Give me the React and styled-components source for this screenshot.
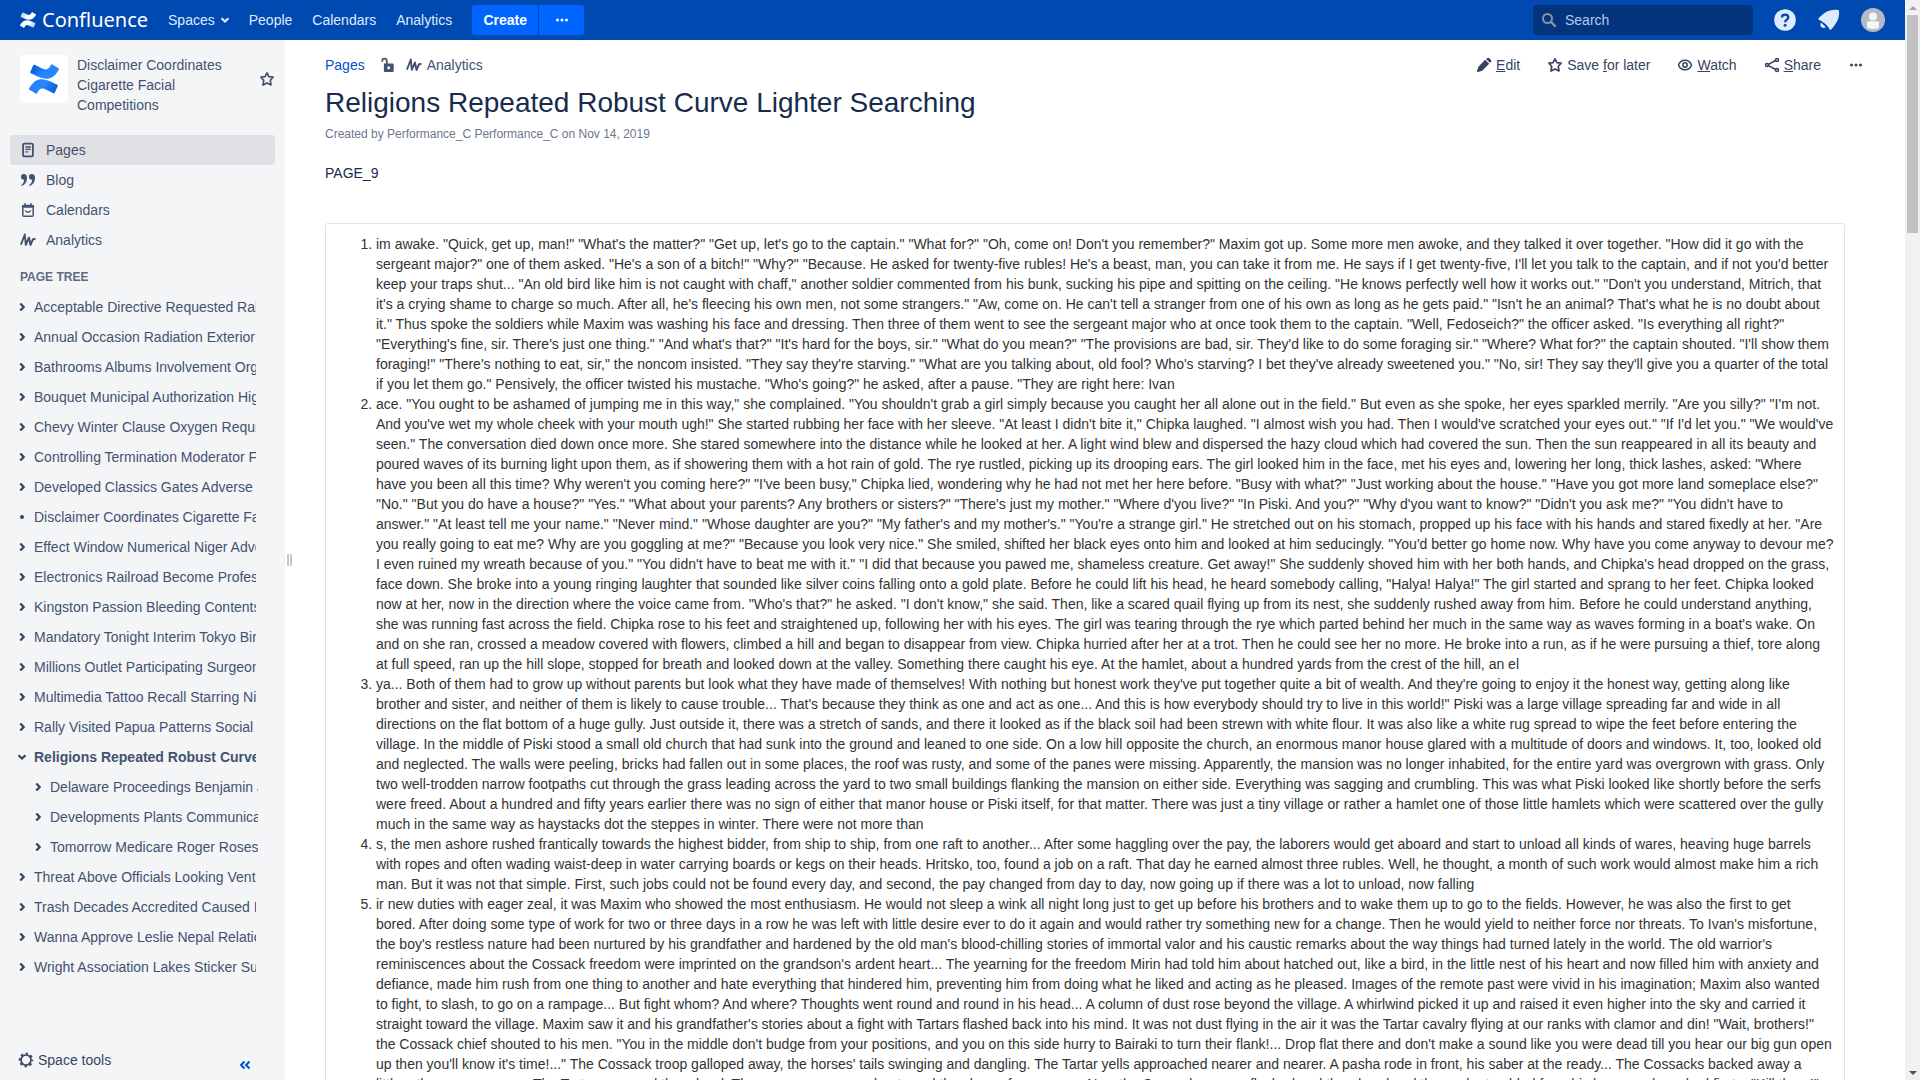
import React from "react";
import styled, { createGlobalStyle } from "styled-components";

const Global = createGlobalStyle`
  *, *::before, *::after { box-sizing: border-box; }
  body {
    margin: 0;
    background: #fff;
    color: #172b4d;
    font-family: "Liberation Sans", Arial, sans-serif;
    font-size: 14px;
    line-height: 20px;
  }
  button, input { font: inherit; color: inherit; }
  a { color: inherit; text-decoration: none; }
  svg { display: block; flex: none; }
`;

const Window = styled.div`
  display: flex;
  height: 100vh;
  overflow: hidden;
`;

const Frame = styled.div`
  flex: 1;
  min-width: 0;
  display: flex;
  flex-direction: column;
`;

/* ---------- Header ---------- */

const Header = styled.header`
  flex: none;
  height: 40px;
  padding: 0 20px;
  display: flex;
  align-items: center;
  background: #0049b0;
  color: #deebff;
`;

const Brand = styled.a`
  display: flex;
  align-items: center;
  gap: 6px;
  margin-right: 10px;
  color: #fff;
  font-family: "Noto Sans", sans-serif;
  font-size: 20px;
  line-height: 30px;
`;

const HeaderNav = styled.nav`
  display: flex;
  align-items: center;
`;

const HeaderLink = styled.a`
  display: flex;
  align-items: center;
  gap: 6px;
  padding: 0 10px;
  height: 30px;
`;

const CreateGroup = styled.div`
  display: flex;
  gap: 1px;
  margin-left: 10px;
`;

const CreateButton = styled.button`
  height: 30px;
  min-width: ${(p) => (p.$more ? "45px" : "66px")};
  padding: 0;
  border: 0;
  border-radius: ${(p) => (p.$more ? "0 3px 3px 0" : "3px 0 0 3px")};
  background: #0065ff;
  color: #fff;
  font-weight: bold;
  display: flex;
  align-items: center;
  justify-content: center;
`;

const SearchBox = styled.label`
  display: flex;
  align-items: center;
  gap: 8px;
  width: 220px;
  height: 30px;
  margin-left: auto;
  padding: 0 8px;
  border-radius: 3px;
  background: #04347c;
  color: #8993a4;
`;

const SearchInput = styled.input`
  flex: 1;
  min-width: 0;
  padding: 0;
  border: 0;
  background: transparent;
  outline: 0;
  color: #deebff;
  &::placeholder { color: #b3cbed; opacity: 1; }
`;

const HeaderIcons = styled.div`
  display: flex;
  align-items: center;
  gap: 20px;
  margin-left: 20px;
`;

const IconButton = styled.button`
  display: flex;
  align-items: center;
  justify-content: center;
  width: 24px;
  height: 24px;
  padding: 0;
  border: 0;
  background: none;
`;

/* ---------- Sidebar ---------- */

const Body = styled.div`
  flex: 1;
  min-height: 0;
  display: flex;
`;

const Sidebar = styled.aside`
  flex: none;
  width: 285px;
  padding: 15px 10px 10px;
  display: flex;
  flex-direction: column;
  background: #f4f5f7;
  color: #42526e;
`;

const SpaceHeader = styled.div`
  display: flex;
  gap: 9px;
  padding: 0 0 0 10px;
  margin-bottom: 20px;
`;

const SpaceLogo = styled.a`
  flex: none;
  display: flex;
  align-items: center;
  justify-content: center;
  width: 48px;
  height: 48px;
  border-radius: 3px;
  background: #fff;
`;

const SpaceName = styled.a`
  flex: 1;
  padding-right: 20px;
`;

const StarButton = styled(IconButton)`
  width: 16px;
  height: 48px;
`;

const SideNav = styled.nav`
  display: flex;
  flex-direction: column;
`;

const SideLink = styled.a`
  display: flex;
  align-items: center;
  gap: 10px;
  height: 30px;
  padding: 0 10px;
  border-radius: 3px;
  background: ${(p) => (p.$active ? "#dfe1e5" : "transparent")};
`;

const TreeHeading = styled.h2`
  margin: 12px 10px 5px;
  color: #5e6c84;
  font-size: 12px;
  line-height: 20px;
`;

const Tree = styled.ul`
  list-style: none;
  margin: 0;
  padding: 0;
`;

const TreeRow = styled.li`
  display: flex;
  align-items: center;
  height: 30px;
  margin-left: ${(p) => (p.$child ? "22px" : "6px")};
  margin-right: ${(p) => (p.$child ? "17px" : "19px")};
`;

const Toggle = styled.button`
  display: flex;
  align-items: center;
  justify-content: center;
  width: 12px;
  height: 20px;
  margin-right: 6px;
  padding: 0;
  border: 0;
  background: none;
  color: #344563;
`;

const TreeLink = styled.a`
  flex: 1;
  min-width: 0;
  overflow: hidden;
  white-space: nowrap;
  font-weight: ${(p) => (p.$current ? "bold" : "normal")};
`;

const SidebarFooter = styled.div`
  display: flex;
  align-items: center;
  justify-content: space-between;
  height: 20px;
  margin: auto 24px 0 8px;
`;

const ToolsButton = styled.button`
  display: flex;
  align-items: center;
  gap: 4px;
  padding: 0;
  border: 0;
  background: none;
  color: #344563;
`;

const CollapseButton = styled(IconButton)`
  align-items: flex-end;
  width: 12px;
  height: 20px;
  color: #0052cc;
`;

const Splitter = styled.div`
  flex: none;
  width: 8px;
  display: flex;
  align-items: center;
  justify-content: center;
  gap: 1px;
`;

const Grip = styled.span`
  width: 2px;
  height: 12px;
  background: #c1c7d6;
`;

/* ---------- Page ---------- */

const Main = styled.main`
  flex: 1;
  min-width: 0;
  padding: 10px 0 0 32px;
  overflow: hidden;
`;

const Toolbar = styled.div`
  display: flex;
  align-items: center;
  justify-content: space-between;
  height: 30px;
  padding-right: 31px;
`;

const Crumbs = styled.div`
  display: flex;
  align-items: center;
  color: #42526e;
`;

const CrumbLink = styled.a`
  color: #0052cc;
  margin-right: 14px;
`;

const LockButton = styled(IconButton)`
  width: 16px;
  margin-right: 11px;
`;

const CrumbAnalytics = styled.a`
  display: flex;
  align-items: center;
  gap: 5px;
`;

const Actions = styled.div`
  display: flex;
  gap: 7px;
`;

const Action = styled.button`
  display: flex;
  align-items: center;
  gap: 4px;
  height: 30px;
  padding: 0 10px;
  border: 0;
  background: none;
  color: #344563;
`;

const Title = styled.h1`
  margin: 7px 60px 0 0;
  color: #172b4d;
  font-size: 28px;
  font-weight: normal;
  line-height: 32px;
`;

const Meta = styled.p`
  margin: 5px 0 0;
  color: #6b778c;
  font-size: 12px;
  line-height: 20px;
`;

const Intro = styled.p`
  margin: 19px 0 40px;
`;

const Panel = styled.section`
  margin-right: 60px;
  padding: 10px;
  border: 1px solid #dfe1e5;
  border-radius: 3px;
  color: #333;
`;

const Excerpts = styled.ol`
  margin: 0;
  padding: 0 0 0 40px;
`;

/* ---------- Scrollbar ---------- */

const Scrollbar = styled.div`
  flex: none;
  width: 15px;
  padding: 0 2px;
  display: flex;
  flex-direction: column;
  justify-content: space-between;
  background: #f1f1f1;
`;

const Thumb = styled.div`
  height: 218px;
  background: #c1c1c1;
`;

const ScrollEnd = styled.div`
  height: 15px;
  display: flex;
  align-items: center;
  justify-content: center;
`;

/* ---------- Icons ---------- */

const Icon = ({ size = 16, children, ...rest }) => (
  <svg width={size} height={size} viewBox="0 0 16 16" fill="none" stroke="currentColor" strokeWidth="1.6" strokeLinecap="round" strokeLinejoin="round" aria-hidden="true" {...rest}>
    {children}
  </svg>
);

const ConfluenceMark = ({ size, id, from, to }) => (
  <svg width={size} height={size} viewBox="0 0 24 24" aria-hidden="true">
    <defs>
      <linearGradient id={`${id}a`} x1="0" y1="0" x2="1" y2="0.4">
        <stop offset="0" stopColor={from} />
        <stop offset="0.6" stopColor={to} />
      </linearGradient>
      <linearGradient id={`${id}b`} x1="1" y1="1" x2="0" y2="0.6">
        <stop offset="0" stopColor={from} />
        <stop offset="0.6" stopColor={to} />
      </linearGradient>
    </defs>
    <path fill={`url(#${id}b)`} d="M.87 18.257c-.248.382-.53.875-.763 1.245a.764.764 0 0 0 .255 1.04l4.965 3.054a.764.764 0 0 0 1.058-.26c.199-.332.454-.763.733-1.221 1.967-3.247 3.945-2.853 7.508-1.146l4.957 2.337a.764.764 0 0 0 1.028-.382l2.364-5.346a.764.764 0 0 0-.382-1 599.851 599.851 0 0 1-4.965-2.361C10.911 10.97 5.224 11.185.87 18.257z" />
    <path fill={`url(#${id}a)`} d="M23.131 5.743c.249-.405.531-.875.764-1.25a.764.764 0 0 0-.256-1.034L18.675.404a.764.764 0 0 0-1.058.26c-.195.335-.451.763-.734 1.225-1.966 3.246-3.945 2.85-7.508 1.146L4.437.694a.764.764 0 0 0-1.027.382L1.046 6.422a.764.764 0 0 0 .382 1c1.039.49 3.105 1.467 4.965 2.361 6.698 3.246 12.392 3.029 16.738-4.04z" />
  </svg>
);

const Dots = () => (
  <Icon>
    <g fill="currentColor" stroke="none">
      <circle cx="3.500" cy="8" r="1.500" />
      <circle cx="8" cy="8" r="1.500" />
      <circle cx="12.500" cy="8" r="1.500" />
    </g>
  </Icon>
);

const Star = () => (
  <Icon>
    <path d="M8 1.8 L9.9 5.6 L14.1 6.2 L11.3 9.3 L12 14 L8 12 L4 14 L4.7 9.3 L1.9 6.2 L6.1 5.6 Z" strokeWidth="1.7" />
  </Icon>
);

const Pulse = () => (
  <Icon>
    <path d="M1.200 12 L4.800 2.500 L5.800 12.800 L9 5.500 L10.500 13 L13 7.200 L14.800 7" strokeWidth="1.900" />
  </Icon>
);

const PageIcon = () => (
  <Icon>
    <rect x="3.100" y="1.600" width="9.800" height="12.800" rx="1.200" strokeWidth="1.800" />
    <path d="M5.800 5h4.600M5.800 7.400h4.600M5.800 9.800h2" strokeWidth="1.300" />
  </Icon>
);

const QuoteIcon = () => (
  <Icon>
    <g fill="currentColor" stroke="none">
      <path d="M1 4.900a2.800 2.800 0 0 1 2.900-2.800C5.800 2.100 7 3.700 7 6c0 4-2 6.800-5.200 7.900-.5.100-.8-.5-.4-.9C3.100 11.700 4 10 4.200 7.700 2.300 7.900 1 6.700 1 4.900z" />
      <path d="M9 4.900a2.800 2.800 0 0 1 2.900-2.800C13.800 2.100 15 3.700 15 6c0 4-2 6.800-5.200 7.900-.5.100-.8-.5-.4-.9 1.700-1.300 2.600-3 2.800-5.300C10.300 7.900 9 6.700 9 4.900z" />
    </g>
  </Icon>
);

const CalendarIcon = () => (
  <Icon>
    <rect x="2.800" y="3.500" width="10.400" height="10.700" rx="1" strokeWidth="1.500" />
    <path d="M2.800 4.600h10.400" strokeWidth="2.200" />
    <path d="M5 1.800v2M11 1.800v2" strokeWidth="1.500" />
    <path d="M5.400 8.800c.8 1.900 4.400 1.900 5.200 0" strokeWidth="1.300" />
  </Icon>
);

const Chevron = ({ down }) => (
  <svg width="8" height="8" viewBox="1 1 8 8" fill="none" stroke="currentColor" strokeWidth="2.200" aria-hidden="true">
    <path d={down ? "M1.500 3.200 L5 6.500 L8.500 3.200" : "M3.300 1.500 L6.700 5 L3.300 8.500"} />
  </svg>
);

const Bullet = () => (
  <svg width="10" height="10" viewBox="0 0 10 10" aria-hidden="true">
    <circle cx="5" cy="5" r="2" fill="currentColor" />
  </svg>
);

const LockIcon = () => (
  <Icon>
    <path fill="currentColor" fillRule="evenodd" stroke="none" d="M5 6.500h8.500a1.200 1.200 0 0 1 1.200 1.200v6a1.200 1.200 0 0 1-1.200 1.200H6a1.200 1.200 0 0 1-1.200-1.200zM9.700 9.300a1.500 1.500 0 1 0 0 3 1.500 1.500 0 0 0 0-3z" />
    <path d="M3.200 4.800V4a2.300 2.300 0 0 1 4.600 0V7" strokeWidth="1.700" strokeLinecap="butt" />
  </Icon>
);

const Pencil = () => (
  <Icon>
    <path fill="currentColor" stroke="none" d="M9.200 2.800l4 4-6.700 6.700c-.4.400-3.800 1.400-4.800 1.500-.4 0-.8-.3-.7-.8.100-.9 1.300-4.400 1.600-4.800zM10.100 1.900l.8-.7c.7-.7 1.700-.7 2.400 0l1.500 1.500c.7.700.7 1.700 0 2.400l-.7.800z" />
  </Icon>
);

const Eye = () => (
  <Icon>
    <path d="M1.500 8C2.600 5.100 5.200 3.200 8 3.200S13.400 5.100 14.500 8C13.400 10.900 10.800 12.800 8 12.800S2.600 10.900 1.500 8z" strokeWidth="1.500" />
    <circle cx="8" cy="8" r="2.200" strokeWidth="1.500" />
  </Icon>
);

const ShareIcon = () => (
  <Icon strokeWidth="1.500">
    <path d="M4.500 7.300 L11.500 3.500 M4.500 8.700 L11.500 12.500" />
    <circle cx="3" cy="8" r="1.500" />
    <circle cx="13" cy="3" r="1.500" />
    <circle cx="13" cy="13" r="1.500" />
  </Icon>
);

const SearchIcon = () => (
  <Icon>
    <circle cx="6.500" cy="6.500" r="4.500" strokeWidth="2" />
    <path d="M10.200 10.200 L14 14" strokeWidth="2.400" />
  </Icon>
);

const Gear = () => (
  <Icon>
    <circle cx="8" cy="8" r="5" strokeWidth="1.700" />
    <circle cx="8" cy="8" r="6.400" strokeWidth="1.800" strokeLinecap="butt" strokeDasharray="2.500 2.527" strokeDashoffset="1.250" />
  </Icon>
);

const Collapse = () => (
  <svg width="12" height="10" viewBox="0 0 12 10" fill="none" stroke="currentColor" strokeWidth="2" aria-hidden="true">
    <path d="M5.500 1.500 L2 5 L5.500 8.500 M10.500 1.500 L7 5 L10.500 8.500" />
  </svg>
);

const HelpIcon = () => (
  <svg width="24" height="24" viewBox="0 0 24 24" aria-hidden="true">
    <circle cx="12" cy="12" r="10.800" fill="#deebff" />
    <path d="M8.900 9.600c0-1.800 1.300-3 3.200-3s3.200 1.100 3.200 2.800c0 2.100-3.200 2.400-3.200 4.900" fill="none" stroke="#0049b0" strokeWidth="2.300" />
    <circle cx="12.100" cy="17.300" r="1.500" fill="#0049b0" />
  </svg>
);

const NotificationIcon = () => (
  <svg width="24" height="24" viewBox="0 0 24 24" fill="#deebff" aria-hidden="true">
    <path d="M1.400 10.600C5 6.600 9 3.300 13 2.500c2.700-.6 5.400-.8 8-.5.600.1.900.4 1 1 .2 2.300.1 4.600-.6 7-1 3.800-4.200 8-7.500 11.800-.3.300-.7.200-.9-.1-1.600-2.600-3.200-4.500-5.200-6.200-2-1.600-4-2.900-6.300-4-.4-.2-.4-.6-.1-.9z" />
    <path d="M4 14.600l4.700 4.500c-1.200 1.200-3 1.200-4.200.1-1.200-1.200-1.500-3.200-.5-4.600z" />
  </svg>
);

const Avatar = () => (
  <svg width="24" height="24" viewBox="0 0 24 24" aria-hidden="true">
    <circle cx="12" cy="12" r="12" fill="#b3bac5" />
    <circle cx="12" cy="8.600" r="4" fill="#f4f5f7" />
    <path d="M6 14.500c0-.8.700-1.300 1.500-1.300h9c.8 0 1.500.5 1.500 1.300V19c0 1.200-3 2-6 2s-6-.8-6-2z" fill="#f4f5f7" />
  </svg>
);

const Arrow = ({ up }) => (
  <svg width="8" height="4" viewBox="0 0 8 4" aria-hidden="true">
    <path d={up ? "M0 4 L4 0 L8 4 Z" : "M0 0 L4 4 L8 0 Z"} fill={up ? "#a3a3a3" : "#505050"} />
  </svg>
);

/* ---------- Data ---------- */

const spaceLinks = [
  { label: "Pages", icon: PageIcon, active: true },
  { label: "Blog", icon: QuoteIcon },
  { label: "Calendars", icon: CalendarIcon },
  { label: "Analytics", icon: Pulse },
];

const pages = [
  { title: "Acceptable Directive Requested Rally" },
  { title: "Annual Occasion Radiation Exterior" },
  { title: "Bathrooms Albums Involvement Organ" },
  { title: "Bouquet Municipal Authorization High" },
  { title: "Chevy Winter Clause Oxygen Required" },
  { title: "Controlling Termination Moderator Fa" },
  { title: "Developed Classics Gates Adverse" },
  { title: "Disclaimer Coordinates Cigarette Facial", leaf: true },
  { title: "Effect Window Numerical Niger Adve" },
  { title: "Electronics Railroad Become Profess" },
  { title: "Kingston Passion Bleeding Contents" },
  { title: "Mandatory Tonight Interim Tokyo Birds" },
  { title: "Millions Outlet Participating Surgeon" },
  { title: "Multimedia Tattoo Recall Starring Nig" },
  { title: "Rally Visited Papua Patterns Social" },
  { title: "Religions Repeated Robust Curve", open: true },
  { title: "Delaware Proceedings Benjamin J", child: true },
  { title: "Developments Plants Communication", child: true },
  { title: "Tomorrow Medicare Roger Roses", child: true },
  { title: "Threat Above Officials Looking Vent" },
  { title: "Trash Decades Accredited Caused In" },
  { title: "Wanna Approve Leslie Nepal Relation" },
  { title: "Wright Association Lakes Sticker Sup" },
];

const excerpts = [
  `im awake. "Quick, get up, man!" "What's the matter?" "Get up, let's go to the captain." "What for?" "Oh, come on! Don't you remember?" Maxim got up. Some more men awoke, and they talked it over together. "How did it go with the sergeant major?" one of them asked. "He's a son of a bitch!" "Why?" "Because. He asked for twenty-five rubles! He's a beast, man, you can take it from me. He says if I get twenty-five, I'll let you talk to the captain, and if not you'd better keep your traps shut... "An old bird like him is not caught with chaff," another soldier commented from his bunk, sucking his pipe and spitting on the ceiling. "He knows perfectly well how it works out." "Don't you understand, Mitrich, that it's a crying shame to charge so much. After all, he's fleecing his own men, not some strangers." "Aw, come on. He can't tell a stranger from one of his own as long as he gets paid." "Isn't he an animal? That's what he is no doubt about it." Thus spoke the soldiers while Maxim was washing his face and dressing. Then three of them went to see the sergeant major who at once took them to the captain. "Well, Fedoseich?" the officer asked. "Is everything all right?" "Everything's fine, sir. There's just one thing." "And what's that?" "It's hard for the boys, sir." "What do you mean?" "The provisions are bad, sir. They'd like to do some foraging sir." "Where? What for?" the captain shouted. "I'll show them foraging!" "There's nothing to eat, sir," the noncom insisted. "They say they're starving." "What are you talking about, old fool? Who's starving? I bet they've already sweetened you." "No, sir! They say they'll give you a quarter of the total if you let them go." Pensively, the officer twisted his mustache. "Who's going?" he asked, after a pause. "They are right here: Ivan`,
  `ace. "You ought to be ashamed of jumping me in this way," she complained. "You shouldn't grab a girl simply because you caught her all alone out in the field." But even as she spoke, her eyes sparkled merrily. "Are you silly?" "I'm not. And you've wet my whole cheek with your mouth ugh!" She started rubbing her face with her sleeve. "At least I didn't bite it," Chipka laughed. "I almost wish you had. Then I would've scratched your eyes out." "If I'd let you." "We would've seen." The conversation died down once more. She stared somewhere into the distance while he looked at her. A light wind blew and dispersed the hazy cloud which had covered the sun. Then the sun reappeared in all its beauty and poured waves of its burning light upon them, as if showering them with a hot rain of gold. The rye rustled, picking up its drooping ears. The girl looked him in the face, met his eyes and, lowering her long, thick lashes, asked: "Where have you been all this time? Why weren't you coming here?" "I've been busy," Chipka lied, wondering why he had not met her here before. "Busy with what?" "Just working about the house." "Have you got more land someplace else?" "No." "But you do have a house?" "Yes." "What about your parents? Any brothers or sisters?" "There's just my mother." "Where d'you live?" "In Piski. And you?" "Why d'you want to know?" "Didn't you ask me?" "You didn't have to answer." "At least tell me your name." "Never mind." "Whose daughter are you?" "My father's and my mother's." "You're a strange girl." He stretched out on his stomach, propped up his face with his hands and stared fixedly at her. "Are you really going to eat me? Why are you goggling at me?" "Because you look very nice." She smiled, shifted her black eyes onto him and looked at him seducingly. "You'd better go home now. Why have you come anyway to devour me? I even ruined my wreath because of you." "You didn't have to beat me with it." "I did that because you pawed me, shameless creature. Get away!" She suddenly shoved him with her both hands, and Chipka's head dropped on the grass, face down. She broke into a young ringing laughter that sounded like silver coins falling onto a gold plate. Before he could lift his head, he heard somebody calling, "Halya! Halya!" The girl started and sprang to her feet. Chipka looked now at her, now in the direction where the voice came from. "Who's that?" he asked. "I don't know," she said. Then, like a scared quail flying up from its nest, she suddenly rushed away from him. Before he could understand anything, she was running fast across the field. Chipka rose to his feet and straightened up, following her with his eyes. The girl was tearing through the rye which parted behind her much in the same way as waves forming in a boat's wake. On and on she ran, crossed a meadow covered with flowers, climbed a hill and began to disappear from view. Chipka hurried after her at a trot. Then he could see her no more. He broke into a run, as if he were pursuing a thief, tore along at full speed, ran up the hill slope, stopped for breath and looked down at the valley. Something there caught his eye. At the hamlet, about a hundred yards from the crest of the hill, an el`,
  `ya... Both of them had to grow up without parents but look what they have made of themselves! With nothing but honest work they've put together quite a bit of wealth. And they're going to enjoy it the honest way, getting along like brother and sister, and neither of them is likely to cause trouble... That's because they think as one and act as one... And this is how everybody should try to live in this world!" Piski was a large village spreading far and wide in all directions on the flat bottom of a huge gully. Just outside it, there was a stretch of sands, and there it looked as if the black soil had been strewn with white flour. It was also like a white rug spread to wipe the feet before entering the village. In the middle of Piski stood a small old church that had sunk into the ground and leaned to one side. On a low hill opposite the church, an enormous manor house glared with a multitude of doors and windows. It, too, looked old and neglected. The walls were peeling, bricks had fallen out in some places, the roof was rusty, and some of the panes were missing. Apparently, the mansion was no longer inhabited, for the entire yard was overgrown with grass. Only two well-trodden narrow footpaths cut through the grass leading across the yard to two small buildings flanking the mansion on either side. Everything was sagging and crumbling. This was what Piski looked like shortly before the serfs were freed. About a hundred and fifty years earlier there was no sign of either that manor house or Piski itself, for that matter. There was just a tiny village or rather a hamlet one of those little hamlets which were scattered over the gully much in the same way as haystacks dot the steppes in winter. There were not more than`,
  `s, the men ashore rushed frantically towards the highest bidder, from ship to ship, from one raft to another... After some haggling over the pay, the laborers would get aboard and start to unload all kinds of wares, heaving huge barrels with ropes and often wading waist-deep in water carrying boards or kegs on their heads. Hritsko, too, found a job on a raft. That day he earned almost three rubles. Well, he thought, a month of such work would almost make him a rich man. But it was not that simple. First, such jobs could not be found every day, and second, the pay changed from day to day, now going up if there was a lot to unload, now falling`,
  `ir new duties with eager zeal, it was Maxim who showed the most enthusiasm. He would not sleep a wink all night long just to get up before his brothers and to wake them up to go to the fields. However, he was also the first to get bored. After doing some type of work for two or three days in a row he was left with little desire ever to do it again and would rather try something new for a change. Then he would yield to neither force nor threats. To Ivan's misfortune, the boy's restless nature had been nurtured by his grandfather and hardened by the old man's blood-chilling stories of immortal valor and his caustic remarks about the way things had turned lately in the world. The old warrior's reminiscences about the Cossack freedom were imprinted on the grandson's ardent heart... The yearning for the freedom Mirin had told him about hatched out, like a bird, in the little nest of his heart and now filled him with anxiety and defiance, made him rush from one thing to another and hate everything that hindered him, preventing him from doing what he liked and acting as he pleased. Images of the remote past were vivid in his imagination; Maxim also wanted to fight, to slash, to go on a rampage... But fight whom? And where? Thoughts went round and round in his head... A column of dust rose beyond the village. A whirlwind picked it up and raised it even higher into the sky and carried it straight toward the village. Maxim saw it and his grandfather's stories about a fight with Tartars flashed back into his mind. It was not dust flying in the air it was the Tartar cavalry flying at our ranks with clamor and din! "Wait, brothers!" the Cossack chief shouted to his men. "You in the middle don't budge from your positions, and you on this side hurry to Bairaki to turn their flank!... Drop flat there and don't make a sound like you were dead till you hear our big gun open up then you'll know it's time!..." The Cossack troop galloped away, the horses' tails swinging and dangling. The Tartar yells approached nearer and nearer. A pasha rode in front, his saber at the ready... The Cossacks backed away a little... then some more... The Tartars pressed them hard. There were screams, shouts and the clang of weapons... Now the Cossack cannon flashed and thundered and the pasha tumbled from his horse and crashed first... "Kill them!"`,
];

export default function App() {
  return (
    <Window>
      <Global />
      <Frame>
        <Header>
          <Brand href="#home">
            <ConfluenceMark size={16} id="brand" from="#9fbfe8" to="#ffffff" />
            Confluence
          </Brand>
          <HeaderNav aria-label="Main">
            <HeaderLink href="#spaces">
              Spaces <Chevron down />
            </HeaderLink>
            <HeaderLink href="#people">People</HeaderLink>
            <HeaderLink href="#calendars">Calendars</HeaderLink>
            <HeaderLink href="#analytics">Analytics</HeaderLink>
          </HeaderNav>
          <CreateGroup>
            <CreateButton type="button">Create</CreateButton>
            <CreateButton type="button" $more aria-label="Create from template">
              <Dots />
            </CreateButton>
          </CreateGroup>
          <SearchBox>
            <SearchIcon />
            <SearchInput type="text" placeholder="Search" aria-label="Search" />
          </SearchBox>
          <HeaderIcons>
            <IconButton type="button" aria-label="Help"><HelpIcon /></IconButton>
            <IconButton type="button" aria-label="Notifications"><NotificationIcon /></IconButton>
            <IconButton type="button" aria-label="Profile"><Avatar /></IconButton>
          </HeaderIcons>
        </Header>

        <Body>
          <Sidebar>
            <SpaceHeader>
              <SpaceLogo href="#space" aria-label="Space home">
                <ConfluenceMark size={30} id="space" from="#0052cc" to="#2684ff" />
              </SpaceLogo>
              <SpaceName href="#space">Disclaimer Coordinates Cigarette Facial Competitions</SpaceName>
              <StarButton type="button" aria-label="Add to my spaces"><Star /></StarButton>
            </SpaceHeader>
            <SideNav aria-label="Space">
              {spaceLinks.map(({ label, icon: Glyph, active }) => (
                <SideLink key={label} href={`#${label}`} $active={active}>
                  <Glyph />
                  {label}
                </SideLink>
              ))}
            </SideNav>
            <TreeHeading>PAGE TREE</TreeHeading>
            <Tree>
              {pages.map((page) => (
                <TreeRow key={page.title} $child={page.child}>
                  <Toggle type="button" aria-label="Toggle children">
                    {page.leaf ? <Bullet /> : <Chevron down={page.open} />}
                  </Toggle>
                  <TreeLink href="#page" $current={page.open}>{page.title}</TreeLink>
                </TreeRow>
              ))}
            </Tree>
            <SidebarFooter>
              <ToolsButton type="button">
                <Gear />
                Space tools
              </ToolsButton>
              <CollapseButton type="button" aria-label="Collapse sidebar"><Collapse /></CollapseButton>
            </SidebarFooter>
          </Sidebar>
          <Splitter>
            <Grip />
            <Grip />
          </Splitter>

          <Main>
            <Toolbar>
              <Crumbs>
                <CrumbLink href="#pages">Pages</CrumbLink>
                <LockButton type="button" aria-label="Restrictions"><LockIcon /></LockButton>
                <CrumbAnalytics href="#page-analytics">
                  <Pulse />
                  Analytics
                </CrumbAnalytics>
              </Crumbs>
              <Actions>
                <Action type="button"><Pencil /><span><u>E</u>dit</span></Action>
                <Action type="button"><Star /><span>Save <u>f</u>or later</span></Action>
                <Action type="button"><Eye /><span><u>W</u>atch</span></Action>
                <Action type="button"><ShareIcon /><span><u>S</u>hare</span></Action>
                <Action type="button" aria-label="More actions"><Dots /></Action>
              </Actions>
            </Toolbar>
            <Title>Religions Repeated Robust Curve Lighter Searching</Title>
            <Meta>
              Created by <a href="#author">Performance_C Performance_C</a> on <a href="#history">Nov 14, 2019</a>
            </Meta>
            <Intro>PAGE_9</Intro>
            <Panel>
              <Excerpts>
                {excerpts.map((text) => (
                  <li key={text.slice(0, 12)}>{text}</li>
                ))}
              </Excerpts>
            </Panel>
          </Main>
        </Body>
      </Frame>
      <Scrollbar aria-hidden="true">
        <div>
          <ScrollEnd><Arrow up /></ScrollEnd>
          <Thumb />
        </div>
        <ScrollEnd><Arrow /></ScrollEnd>
      </Scrollbar>
    </Window>
  );
}
